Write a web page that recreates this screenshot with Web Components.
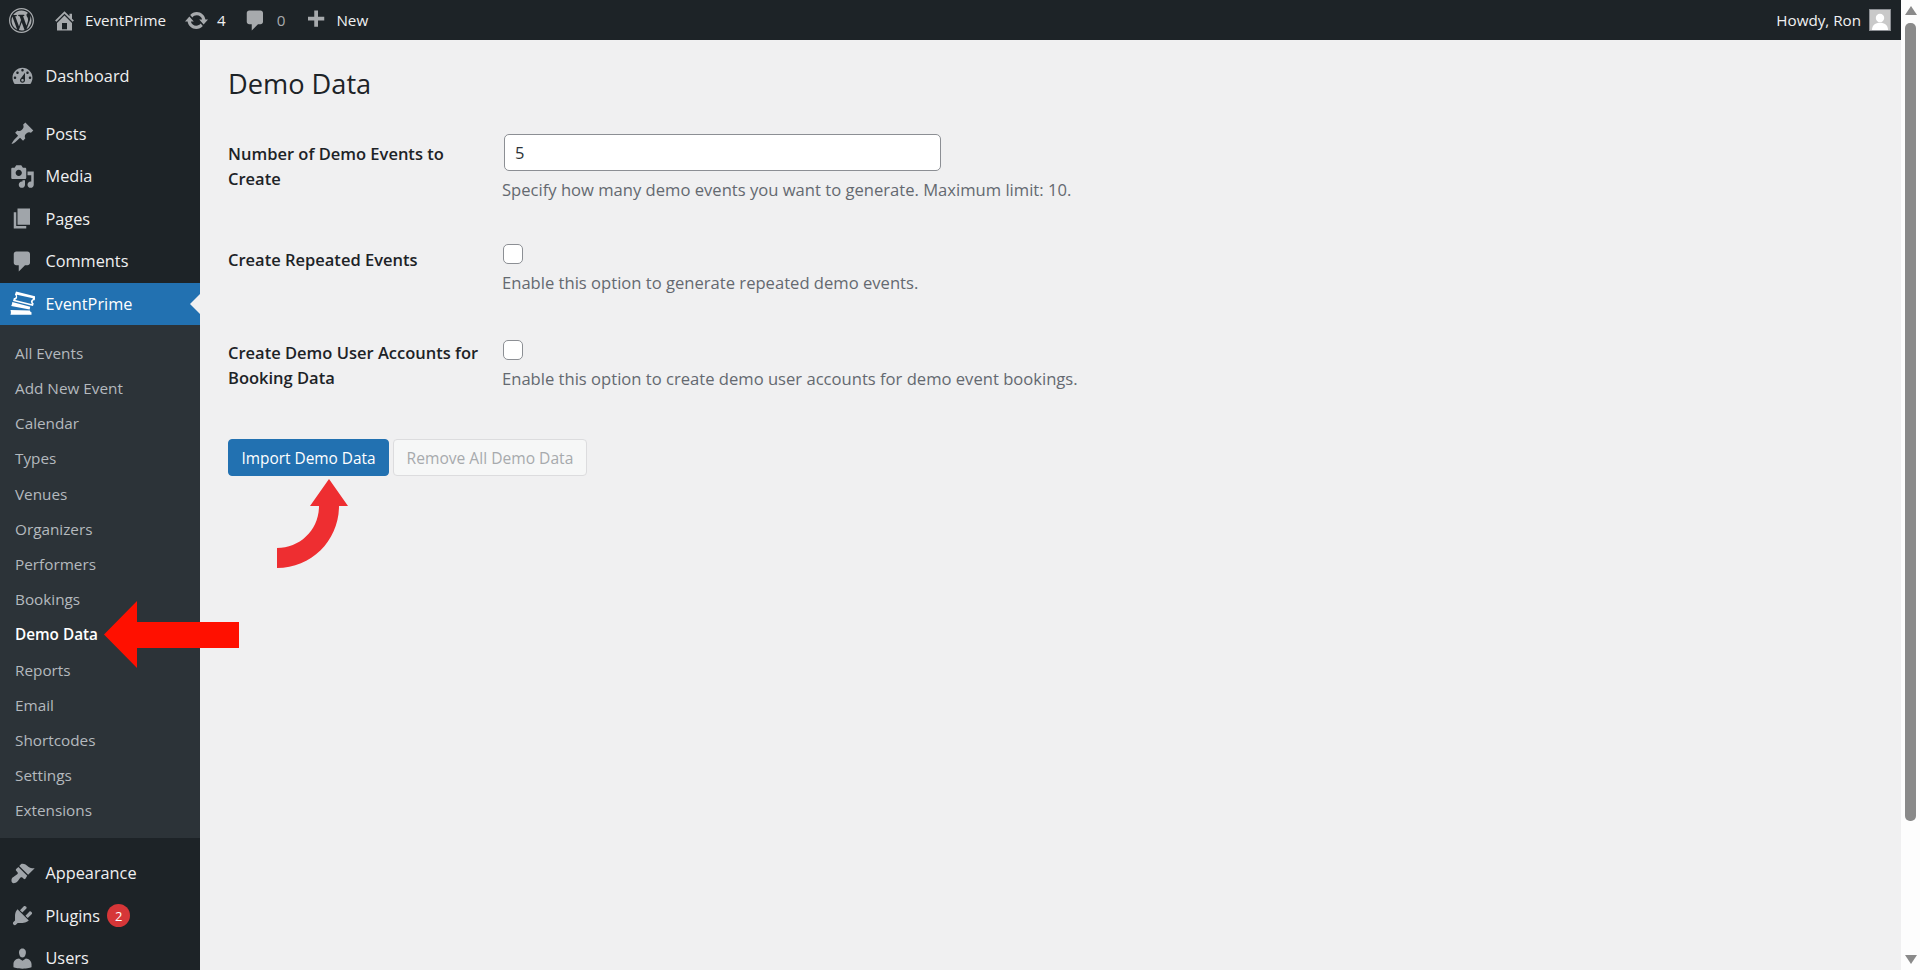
<!doctype html>
<html lang="en">
<head>
<meta charset="utf-8">
<title>Demo Data</title>
<style>
  html, body { margin: 0; height: 100%; overflow: hidden; background: #f0f0f1; }
  body { font-family: "Open Sans", "Noto Sans", sans-serif; }
</style>
</head>
<body>
<wp-shell>
  <admin-bar slot="bar"></admin-bar>
  <admin-menu slot="menu"></admin-menu>
  <demo-page slot="main"></demo-page>
</wp-shell>

<script>
const ICONS = {
  wp: 'M20 10c0-5.52-4.48-10-10-10S0 4.48 0 10s4.48 10 10 10 10-4.48 10-10zM10 1.01c4.97 0 8.99 4.02 8.99 8.99s-4.02 8.99-8.99 8.99S1.01 14.97 1.01 10 5.03 1.01 10 1.01zM8.01 14.82L4.96 6.61c.49-.03 1.05-.08 1.05-.08.43-.05.38-1.01-.06-.99 0 0-1.29.1-2.13.1-.15 0-.33 0-.52-.01 1.44-2.17 3.9-3.6 6.7-3.6 2.09 0 3.99.79 5.41 2.09-.6-.08-1.45.35-1.45 1.42 0 .66.38 1.22.79 1.88.31.54.5 1.22.5 2.21 0 1.34-1.27 4.48-1.27 4.48l-2.71-7.5c.48-.03.75-.16.75-.16.43-.05.38-1.1-.05-1.08 0 0-1.3.11-2.14.11-.78 0-2.11-.11-2.11-.11-.43-.02-.48 1.06-.05 1.08l.84.08 1.12 3.04zm6.02 2.15L16.64 10s.67-1.69.39-3.81c.63 1.14.94 2.42.94 3.81 0 2.96-1.56 5.58-3.94 6.97zM2.68 6.77L6.5 17.25c-2.67-1.3-4.47-4.08-4.47-7.25 0-1.16.2-2.23.65-3.23zm7.45 4.53l2.29 6.25c-.75.27-1.57.42-2.42.42-.72 0-1.41-.11-2.06-.3z',
  home: 'M16 8.5l1.53 1.53-1.06 1.06L10 4.62l-6.47 6.47-1.06-1.06L10 2.5l4 4v-2h2v4zm-6-2.46l6 5.99V18H4v-5.97zM12 17v-5H8v5h4z',
  updates: 'M10.2 3.28c3.53 0 6.43 2.61 6.92 6h2.08l-3.5 4-3.5-4h2.32c-.45-1.97-2.21-3.44-4.32-3.44-1.45 0-2.73.71-3.54 1.78L4.95 5.66C6.23 4.2 8.11 3.28 10.2 3.28zm-.4 13.44c-3.52 0-6.43-2.61-6.92-6H.8l3.5-4c1.17 1.33 2.33 2.67 3.5 4H5.48c.45 1.97 2.21 3.44 4.32 3.44 1.45 0 2.73-.71 3.54-1.78l1.71 1.95c-1.28 1.46-3.15 2.39-5.25 2.39z',
  comment: 'M5 2h9c1.1 0 2 .9 2 2v7c0 1.1-.9 2-2 2h-2l-5 5v-5H5c-1.1 0-2-.9-2-2V4c0-1.1.9-2 2-2z',
  plus: 'M17 7v3h-5v5H9v-5H4V7h5V2h3v5h5z',
  dashboard: 'M3.76 16h12.48c1.1-1.37 1.76-3.11 1.76-5 0-4.42-3.58-8-8-8s-8 3.58-8 8c0 1.89.66 3.63 1.76 5zM10 4c.55 0 1 .45 1 1s-.45 1-1 1-1-.45-1-1 .45-1 1-1zM6 6c.55 0 1 .45 1 1s-.45 1-1 1-1-.45-1-1 .45-1 1-1zm8 0c.55 0 1 .45 1 1s-.45 1-1 1-1-.45-1-1 .45-1 1-1zm-5.37 5.55L12 7v6c0 1.1-.9 2-2 2s-2-.9-2-2c0-.57.24-1.08.63-1.45zM4 10c.55 0 1 .45 1 1s-.45 1-1 1-1-.45-1-1 .45-1 1-1zm12 0c.55 0 1 .45 1 1s-.45 1-1 1-1-.45-1-1 .45-1 1-1zm-5 3c0-.55-.45-1-1-1s-1 .45-1 1 .45 1 1 1 1-.45 1-1z',
  posts: 'M10.44 3.02l1.82-1.82 6.36 6.35-1.83 1.82c-1.05-.68-2.48-.57-3.41.36l-.75.75c-.92.93-1.04 2.35-.35 3.41l-1.83 1.82-2.41-2.41-2.8 2.79c-.42.42-3.38 2.71-3.8 2.29s1.86-3.39 2.28-3.81l2.79-2.79L4.1 9.36l1.83-1.82c1.05.69 2.48.57 3.4-.36l.75-.75c.93-.92 1.05-2.35.36-3.41z',
  media: 'M13 11V4c0-.55-.45-1-1-1h-1.67L9 1H5L3.67 3H2c-.55 0-1 .45-1 1v7c0 .55.45 1 1 1h10c.55 0 1-.45 1-1zM7 4.5c1.38 0 2.5 1.12 2.5 2.5S8.38 9.5 7 9.5 4.5 8.38 4.5 7 5.62 4.5 7 4.5zM14 6h5v10.5c0 1.38-1.12 2.5-2.5 2.5S14 17.88 14 16.5s1.12-2.5 2.5-2.5c.17 0 .34.02.5.05V9h-3V6zm-4 8.05V13h2v3.5c0 1.38-1.12 2.5-2.5 2.5S7 17.88 7 16.5 8.12 14 9.5 14c.17 0 .34.02.5.05z',
  pages: 'M6 15V2h10v13H6zm-1 1h8v2H3V5h2v11z',
  appearance: 'M14.48 11.06L7.41 3.99l1.5-1.5c.5-.56 2.3-.47 3.51.32 1.21.8 1.43 1.28 2.91 2.1 1.18.64 2.45 1.26 4.45.85zm-.71.71L6.7 4.7 4.93 6.47c-.39.39-.39 1.02 0 1.41l1.06 1.06c.39.39.39 1.03 0 1.42-.6.6-1.43 1.11-2.21 1.69-.35.26-.7.53-1.01.84C1.43 13.23.75 15.5 1.53 16.98c.78 1.47 3.05.8 4.39-.54.31-.31.58-.66.84-1.01.58-.78 1.09-1.61 1.69-2.21.39-.39 1.03-.39 1.42 0l1.06 1.06c.39.39 1.02.39 1.41 0z',
  plugins: 'M13.11 4.36L9.87 7.6 8 5.73l3.24-3.24c.35-.34 1.05-.2 1.56.32.52.51.66 1.21.31 1.55zm-8 1.77l.91-1.12 9.01 9.01-1.19.84c-.71.71-2.63 1.16-3.82 1.16H6.14L4.9 17.26c-.59.59-1.54.59-2.12 0-.59-.58-.59-1.53 0-2.12l1.24-1.24v-3.88c0-1.13.4-3.19 1.09-3.89zm7.26 3.97l3.24-3.24c.34-.35 1.04-.21 1.55.31.52.51.66 1.21.31 1.55l-3.24 3.25z',
  users: 'M10 9.25c-2.27 0-2.73-3.44-2.73-3.44C7 4.02 7.82 2 9.97 2c2.16 0 2.98 2.02 2.71 3.81 0 0-.41 3.44-2.68 3.44zm0 2.57L12.72 10c2.39 0 4.52 2.33 4.52 4.53v2.49s-3.65 1.13-7.24 1.13c-3.65 0-7.24-1.13-7.24-1.13v-2.49c0-2.25 1.94-4.48 4.47-4.48z',
  // stacked tickets, top one hollow
  tickets: 'M4.8.4L20.6 4.4l-.9 3c-.8-.1-1.3.3-1.5 1s.1 1.3.8 1.6l-.6 1.9L2.4 7.9l.7-2.4c.8.1 1.4-.3 1.6-1s-.2-1.3-.8-1.6zM5.6 2.9l-.1.8c.3.6.3 1.2.1 1.8-.2.6-.6 1-1.2 1.3l-.1.4 12.8 3.2.2-.6c-.5-.5-.7-1.2-.5-1.9.2-.7.7-1.2 1.3-1.4l.2-.7zM1.8 8.8l14.4 3.7-.5 2.3L.9 11.9c.5-.5.9-1.7.9-3.1zM.4 15.2l15.6.3c.1.8.5 1.3 1.2 1.5v2H.3c.5-.6.5-2.5.1-3.8z'
};

class WpIcon extends HTMLElement {
  connectedCallback() {
    const size = this.getAttribute('size') || 25;
    this.attachShadow({ mode: 'open' }).innerHTML = `
      <style>
        :host { display: block; width: ${size}px; height: ${size}px; flex: none; }
        svg { display: block; width: 100%; height: 100%; fill: currentColor; }
      </style>
      <svg viewBox="0 0 20 20"><path fill-rule="evenodd" d="${ICONS[this.getAttribute('name')]}"/></svg>`;
  }
}

class WpShell extends HTMLElement {
  constructor() {
    super();
    this.attachShadow({ mode: 'open' }).innerHTML = `
      <style>
        :host { display: flex; position: relative; width: 1920px; height: 970px; overflow: hidden; }
        .page { flex: 1; min-width: 0; display: flex; flex-direction: column; }
        .body { flex: 1; min-height: 0; display: flex; }
        .side { width: 200px; flex: none; background: #1d2327; }
        .main { flex: 1; min-width: 0; background: #f0f0f1; }
        .scroll { width: 19px; flex: none; background: #fdfdfd; display: flex; flex-direction: column; align-items: center; }
        .up, .down { width: 0; height: 0; border-left: 6px solid transparent; border-right: 6px solid transparent; }
        .up { margin-top: 6px; border-bottom: 9px solid #8a8a8a; }
        .thumb { width: 11px; height: 798px; margin-top: 8px; border-radius: 5px; background: #8a8a8a; }
        .down { margin-top: 134px; border-top: 9px solid #8a8a8a; }
        svg { position: absolute; inset: 0; pointer-events: none; }
      </style>
      <div class="page">
        <slot name="bar"></slot>
        <div class="body">
          <div class="side"><slot name="menu"></slot></div>
          <div class="main"><slot name="main"></slot></div>
        </div>
      </div>
      <div class="scroll"><div class="up"></div><div class="thumb"></div><div class="down"></div></div>
      <svg width="1920" height="970" viewBox="0 0 1920 970">
        <path fill="#ff1000" d="M104 634.5L137 601V622H239V648H137V668Z"/>
        <path fill="#ee2e31" d="M319 506C319 530 300 548 277 548V568C312 568 339 540 339 506H348L329 479L310 506Z"/>
      </svg>`;
  }
}

class AdminBar extends HTMLElement {
  constructor() {
    super();
    this.attachShadow({ mode: 'open' }).innerHTML = `
      <style>
        :host { display: flex; align-items: center; height: 40px; background: #1d2327; color: #f0f0f1; font-size: 15.2px; }
        wp-icon { color: #a7aaad; }
        .logo { margin-left: 9px; }
        .home { margin-left: 18px; }
        .site { margin-left: 8px; }
        .upd { margin-left: 18px; }
        .num { margin-left: 8px; }
        .com { margin-left: 17.5px; }
        .dim { color: #a7aaad; margin-left: 8.5px; }
        .add { margin-left: 18px; }
        .new { margin-left: 8px; }
        .who { margin-left: auto; }
        .avatar { width: 20px; height: 20px; margin: 0 10px 0 8px; border: 1px solid #8c8f94; background: #c9c9c9; overflow: hidden; }
        .avatar svg { display: block; width: 20px; height: 20px; fill: #fff; }
      </style>
      <wp-icon class="logo" name="wp"></wp-icon>
      <wp-icon class="home" name="home"></wp-icon>
      <span class="site">EventPrime</span>
      <wp-icon class="upd" name="updates"></wp-icon>
      <span class="num">4</span>
      <wp-icon class="com" name="comment"></wp-icon>
      <span class="dim">0</span>
      <wp-icon class="add" name="plus"></wp-icon>
      <span class="new">New</span>
      <span class="who">Howdy, Ron</span>
      <div class="avatar"><svg viewBox="0 0 20 20"><circle cx="10" cy="8" r="4.2"/><path d="M2 20c0-5 3.5-7.2 8-7.2S18 15 18 20Z"/></svg></div>`;
  }
}

class MenuItem extends HTMLElement {
  constructor() {
    super();
    this.attachShadow({ mode: 'open' });
  }

  connectedCallback() {
    const active = this.hasAttribute('active');
    this.shadowRoot.innerHTML = `
      <style>
        :host { display: flex; align-items: center; position: relative; height: 42.5px; font-size: 16.3px; color: #f0f0f1; }
        :host([active]) { background: #2271b1; color: #fff; }
        wp-icon { margin: 0 10.5px 0 10px; color: ${active ? '#fff' : '#a0a5aa'}; }
        .tip { position: absolute; right: 0; top: 11px; border: 10px solid transparent; border-right-color: #f0f0f1; border-left: 0; }
      </style>
      <wp-icon name="${this.getAttribute('icon')}"></wp-icon>
      <slot></slot>
      ${active ? '<span class="tip"></span>' : ''}`;
  }
}

class MenuBadge extends HTMLElement {
  constructor() {
    super();
    this.attachShadow({ mode: 'open' }).innerHTML = `
      <style>
        :host { display: flex; align-items: center; justify-content: center; width: 23px; height: 23px; margin-left: 7px; border-radius: 50%; background: #d63638; color: #fff; font-size: 13px; }
      </style>
      <slot></slot>`;
  }
}

class SubItem extends HTMLElement {
  constructor() {
    super();
    this.attachShadow({ mode: 'open' }).innerHTML = `
      <style>
        :host { display: flex; align-items: center; height: 35.2px; padding-left: 15px; font-size: 15.3px; color: #b4b9be; }
        :host([current]) { color: #fff; font-weight: 600; }
      </style>
      <slot></slot>`;
  }
}

class AdminMenu extends HTMLElement {
  constructor() {
    super();
    const subs = ['All Events', 'Add New Event', 'Calendar', 'Types', 'Venues', 'Organizers', 'Performers', 'Bookings', 'Demo Data', 'Reports', 'Email', 'Shortcodes', 'Settings', 'Extensions'];
    this.attachShadow({ mode: 'open' }).innerHTML = `
      <style>
        :host { display: block; padding-top: 15px; }
        .gap { height: 15px; }
        .gap.low { height: 14.2px; }
        .subs { background: #2c3338; padding: 10.3px 0 9.9px; }
      </style>
      <menu-item icon="dashboard">Dashboard</menu-item>
      <div class="gap"></div>
      <menu-item icon="posts">Posts</menu-item>
      <menu-item icon="media">Media</menu-item>
      <menu-item icon="pages">Pages</menu-item>
      <menu-item icon="comment">Comments</menu-item>
      <menu-item icon="tickets" active>EventPrime</menu-item>
      <div class="subs">
        ${subs.map(s => `<sub-item${s === 'Demo Data' ? ' current' : ''}>${s}</sub-item>`).join('')}
      </div>
      <div class="gap low"></div>
      <menu-item icon="appearance">Appearance</menu-item>
      <menu-item icon="plugins">Plugins<menu-badge>2</menu-badge></menu-item>
      <menu-item icon="users">Users</menu-item>`;
  }
}

class FormRow extends HTMLElement {
  constructor() {
    super();
    this.attachShadow({ mode: 'open' });
  }

  connectedCallback() {
    const kind = this.getAttribute('kind');
    const field = kind === 'number'
      ? '<input class="num" type="text" value="5">'
      : '<input class="check" type="checkbox">';
    this.shadowRoot.innerHTML = `
      <style>
        :host { display: grid; grid-template-columns: 275px 1fr; height: ${this.getAttribute('h')}px; padding-top: 19px; box-sizing: border-box; }
        label { display: block; width: 262px; margin-top: ${this.getAttribute('offset')}px; font-size: 16.5px; font-weight: 600; line-height: 25px; color: #1d2327; }
        input { display: block; box-sizing: border-box; background: #fff; border: 1px solid #8c8f94; outline: 0; margin: 0; font-family: inherit; }
        .num { width: 437px; height: 37px; margin-left: 1px; padding: 0 10px; border-radius: 5px; font-size: 16.5px; color: #2c3338; }
        .check { appearance: none; width: 20px; height: 20px; border-radius: 5px; }
        p { margin: 5.5px 0 0 -1px; font-size: 16.6px; line-height: 25px; color: #646970; white-space: nowrap; }
      </style>
      <label><slot name="label"></slot></label>
      <div>${field}<p><slot name="desc"></slot></p></div>`;
  }
}

class WpButton extends HTMLElement {
  constructor() {
    super();
    this.attachShadow({ mode: 'open' }).innerHTML = `
      <style>
        :host { display: block; }
        button { display: block; height: 37px; box-sizing: border-box; padding: 1px 12.5px 0; border-radius: 4px; border: 1px solid #2271b1; background: #2271b1; color: #fff; font-family: inherit; font-size: 15.4px; }
        :host([disabled]) button { font-size: 15.6px; background: #f6f7f7; border-color: #dcdcde; color: #a7aaad; }
      </style>
      <button><slot></slot></button>`;
  }
}

class DemoPage extends HTMLElement {
  constructor() {
    super();
    this.attachShadow({ mode: 'open' }).innerHTML = `
      <style>
        :host { display: block; padding: 26px 0 0 28px; }
        h1 { margin: 0 0 13px; font-size: 27.2px; font-weight: 400; line-height: 36px; color: #1d2327; }
        .actions { display: flex; gap: 4px; margin-top: 22px; }
      </style>
      <h1>Demo Data</h1>
      <form-row kind="number" h="110" offset="6.5">
        <span slot="label">Number of Demo Events to Create</span>
        <span slot="desc">Specify how many demo events you want to generate. Maximum limit: 10.</span>
      </form-row>
      <form-row kind="check" h="96" offset="2.5">
        <span slot="label">Create Repeated Events</span>
        <span slot="desc">Enable this option to generate repeated demo events.</span>
      </form-row>
      <form-row kind="check" h="96" offset="-0.5">
        <span slot="label">Create Demo User Accounts for Booking Data</span>
        <span slot="desc">Enable this option to create demo user accounts for demo event bookings.</span>
      </form-row>
      <div class="actions">
        <wp-button>Import Demo Data</wp-button>
        <wp-button disabled>Remove All Demo Data</wp-button>
      </div>`;
  }
}

customElements.define('wp-icon', WpIcon);
customElements.define('wp-shell', WpShell);
customElements.define('admin-bar', AdminBar);
customElements.define('menu-item', MenuItem);
customElements.define('menu-badge', MenuBadge);
customElements.define('sub-item', SubItem);
customElements.define('admin-menu', AdminMenu);
customElements.define('form-row', FormRow);
customElements.define('wp-button', WpButton);
customElements.define('demo-page', DemoPage);
</script>
</body>
</html>
